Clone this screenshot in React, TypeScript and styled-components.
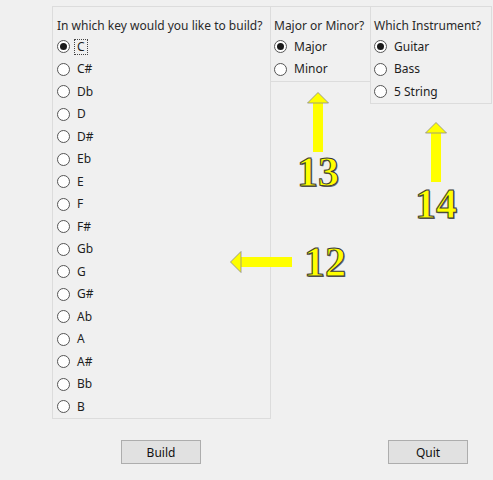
import { FC } from 'react';
import styled, { createGlobalStyle } from 'styled-components';

const GlobalStyle = createGlobalStyle`
  html, body {
    margin: 0;
    padding: 0;
    background: #f0f0f0;
  }
`;

const Window = styled.div`
  position: relative;
  box-sizing: border-box;
  width: 493px;
  height: 480px;
  padding: 6px 0 0 52px;
  background: #f0f0f0;
  font-family: 'Segoe UI', 'Noto Sans', 'Liberation Sans', sans-serif;
  font-size: 12px;
  color: #1e1e1e;
  overflow: hidden;
`;

const PanelRow = styled.div`
  display: flex;
  align-items: flex-start;
`;

const Panel = styled.fieldset<{ $width: number; $pad: number; $first?: boolean }>`
  box-sizing: border-box;
  width: ${({ $width }) => $width}px;
  margin: 0 0 0 ${({ $first }) => ($first ? 0 : -1)}px;
  padding: 11px 0 0 ${({ $pad }) => $pad}px;
  border: 1px solid #dcdcdc;
  min-width: 0;
`;

const Title = styled.div`
  height: 16px;
  line-height: 16px;
  margin-bottom: 1.5px;
  white-space: nowrap;
  color: #2a2a2a;
`;

const RadioRow = styled.label`
  display: flex;
  align-items: center;
  height: 22.5px;
`;

const RadioDot = styled.span<{ $checked?: boolean }>`
  position: relative;
  box-sizing: border-box;
  width: 13px;
  height: 13px;
  border-radius: 50%;
  border: 1px solid #555;
  background: #fff;
  flex: none;

  &::after {
    content: '';
    display: ${({ $checked }) => ($checked ? 'block' : 'none')};
    position: absolute;
    left: 2px;
    top: 2px;
    width: 7px;
    height: 7px;
    border-radius: 50%;
    background: #1a1a1a;
  }
`;

const RadioLabel = styled.span<{ $focused?: boolean }>`
  margin-left: 4px;
  padding: 0 2px;
  line-height: 14px;
  border: 1px dotted ${({ $focused }) => ($focused ? '#444' : 'transparent')};
  white-space: nowrap;
`;

const ButtonRow = styled.div`
  display: flex;
  gap: 187px;
  margin: 21px 0 0 69px;
`;

const Button = styled.button`
  box-sizing: border-box;
  width: 80px;
  height: 24px;
  padding: 0;
  background: #e1e1e1;
  border: 1px solid #adadad;
  font-family: inherit;
  font-size: 12px;
  color: #111;
`;

const Callout = styled.div<{ $x: number; $y: number }>`
  position: absolute;
  left: ${({ $x }) => $x}px;
  top: ${({ $y }) => $y}px;
  line-height: 0;
`;

const CalloutNumber = styled.div<{ $x: number; $y: number }>`
  position: absolute;
  left: ${({ $x }) => $x}px;
  top: ${({ $y }) => $y}px;
  font-family: 'Liberation Serif', 'DejaVu Serif', serif;
  font-weight: bold;
  font-size: 42px;
  line-height: 1;
  color: #ffff00;
  -webkit-text-stroke: 1px #3a3a3a;
  text-shadow: 1px 1px 0 #6a6a6a;
`;

const ArrowUp: FC<{ length: number; rotate?: number }> = ({ length, rotate = 0 }) => (
  <svg
    width={22}
    height={length}
    viewBox={`0 0 22 ${length}`}
    style={{ transform: `rotate(${rotate}deg)`, transformOrigin: '11px 11px' }}
  >
    <rect x={6} y={10} width={10} height={length - 10} fill="#ffff00" />
    <polygon points="11,0.5 21.5,11 0.5,11" fill="#ffff00" stroke="#8a8a8a" strokeWidth={0.8} />
  </svg>
);

const keys = ['C', 'C#', 'Db', 'D', 'D#', 'Eb', 'E', 'F', 'F#', 'Gb', 'G', 'G#', 'Ab', 'A', 'A#', 'Bb', 'B'];

const Radio: FC<{ label: string; checked?: boolean; focused?: boolean }> = ({ label, checked, focused }) => (
  <RadioRow>
    <RadioDot $checked={checked} />
    <RadioLabel $focused={focused}>{label}</RadioLabel>
  </RadioRow>
);

export default function App() {
  return (
    <Window>
      <GlobalStyle />
      <PanelRow>
        <Panel $width={219} $pad={4} $first>
          <Title>In which key would you like to build?</Title>
          {keys.map((k, i) => (
            <Radio key={k} label={k} checked={i === 0} focused={i === 0} />
          ))}
        </Panel>
        <Panel $width={101} $pad={3}>
          <Title>Major or Minor?</Title>
          <Radio label="Major" checked />
          <Radio label="Minor" />
        </Panel>
        <Panel $width={122} $pad={3}>
          <Title>Which Instrument?</Title>
          <Radio label="Guitar" checked />
          <Radio label="Bass" />
          <Radio label="5 String" />
        </Panel>
      </PanelRow>
      <ButtonRow>
        <Button>Build</Button>
        <Button>Quit</Button>
      </ButtonRow>

      <Callout $x={307} $y={92}>
        <ArrowUp length={60} />
      </Callout>
      <CalloutNumber $x={297} $y={151}>13</CalloutNumber>

      <Callout $x={425} $y={122}>
        <ArrowUp length={60} />
      </Callout>
      <CalloutNumber $x={415} $y={183}>14</CalloutNumber>

      <Callout $x={230} $y={251}>
        <ArrowUp length={62} rotate={-90} />
      </Callout>
      <CalloutNumber $x={304} $y={241}>12</CalloutNumber>
    </Window>
  );
}
